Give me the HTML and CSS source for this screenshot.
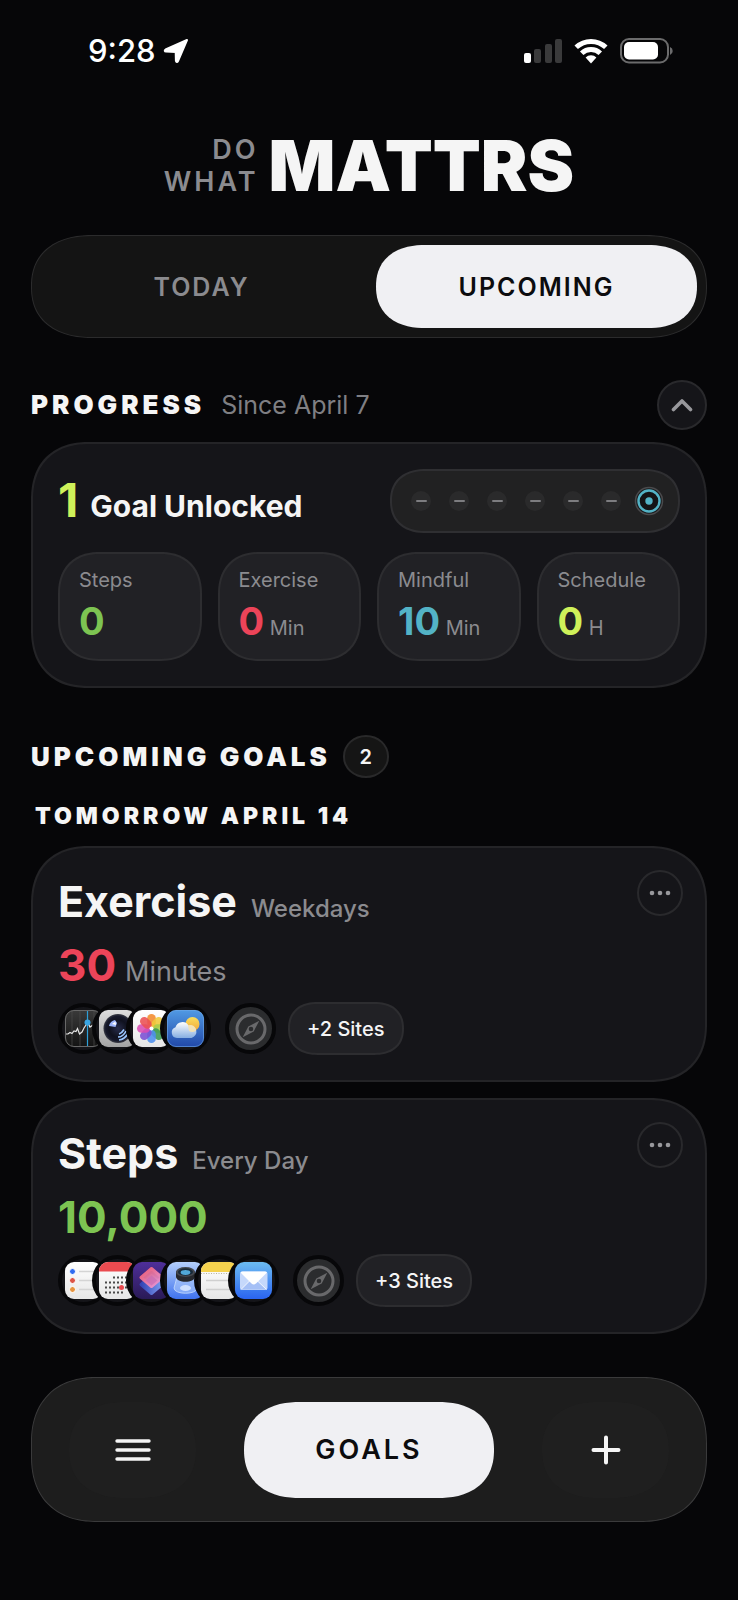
FILE: index.html
```html
<!DOCTYPE html>
<html lang="en">
<head>
<meta charset="utf-8">
<meta name="viewport" content="width=device-width, initial-scale=1">
<title>Do What Mattrs</title>
<link rel="stylesheet" href="styles.css">
</head>
<body>
<svg class="defs" width="0" height="0" aria-hidden="true">
  <defs>
    <clipPath id="tile"><rect width="37" height="37" rx="9"/></clipPath>
    <linearGradient id="gStocks" x1="0" y1="0" x2="0" y2="1"><stop offset="0" stop-color="#3a3a3a"/><stop offset="1" stop-color="#131313"/></linearGradient>
    <linearGradient id="gSilver" x1="0" y1="0" x2="0" y2="1"><stop offset="0" stop-color="#dedede"/><stop offset="1" stop-color="#a3a3a3"/></linearGradient>
    <linearGradient id="gPaper" x1="0" y1="0" x2="0" y2="1"><stop offset="0" stop-color="#ffffff"/><stop offset="1" stop-color="#e6e6e6"/></linearGradient>
    <linearGradient id="gSky" x1="0" y1="0" x2="0" y2="1"><stop offset="0" stop-color="#519ae4"/><stop offset="1" stop-color="#2148a8"/></linearGradient>
    <linearGradient id="gSun" x1="0" y1="0" x2="0" y2="1"><stop offset="0" stop-color="#fbdf5c"/><stop offset="1" stop-color="#f0a83c"/></linearGradient>
    <linearGradient id="gCloud" x1="0" y1="0" x2="0" y2="1"><stop offset="0" stop-color="#ffffff"/><stop offset="1" stop-color="#86aee2"/></linearGradient>
    <linearGradient id="gPurple" x1="0" y1="0" x2="0" y2="1"><stop offset="0" stop-color="#4f2f9a"/><stop offset="1" stop-color="#291a56"/></linearGradient>
    <linearGradient id="gPink" x1="0" y1="0" x2="1" y2="1"><stop offset="0" stop-color="#ea5a70"/><stop offset="1" stop-color="#e49be0"/></linearGradient>
    <linearGradient id="gBlue" x1="0" y1="0" x2="1" y2="0"><stop offset="0" stop-color="#3444b4"/><stop offset="1" stop-color="#7d9cf0"/></linearGradient>
    <linearGradient id="gLoupe" x1="0" y1="0" x2="0" y2="1"><stop offset="0" stop-color="#b4cffb"/><stop offset="1" stop-color="#3f72ee"/></linearGradient>
    <linearGradient id="gMail" x1="0" y1="0" x2="0" y2="1"><stop offset="0" stop-color="#6cbcf2"/><stop offset="1" stop-color="#2a64f0"/></linearGradient>
    <radialGradient id="gLens"><stop offset="0" stop-color="#272c4a"/><stop offset="0.6" stop-color="#10121f"/><stop offset="0.85" stop-color="#16182a"/><stop offset="1" stop-color="#3a3c46"/></radialGradient>
    <symbol id="compass" viewBox="0 0 32 32">
      <circle cx="16" cy="16" r="14" fill="none" stroke="#69696b" stroke-width="3"/>
      <path fill="#69696b" fill-rule="evenodd" d="M24.300 7.700 18.700 18.400 7.700 24.300 13.300 13.600ZM16 13.700a2.300 2.300 0 1 0 0 4.600 2.300 2.300 0 0 0 0-4.600Z"/>
    </symbol>
    <symbol id="dots" viewBox="0 0 22 6"><g fill="#98989c"><circle cx="3" cy="3" r="2.300"/><circle cx="11" cy="3" r="2.300"/><circle cx="19" cy="3" r="2.300"/></g></symbol>
  </defs>
</svg>

<header class="status">
  <div class="status-side">
    <time class="clock">9:28</time>
    <svg width="26" height="26" viewBox="0 0 26 26" aria-hidden="true"><path fill="#fff" stroke="#fff" stroke-width="2" stroke-linejoin="round" d="M24 2 15 23C14.300 24.500 13 24.300 12.900 22.800L12.700 14 3 13.600C1.500 13.500 1.300 12.300 2.600 11.500Z"/></svg>
  </div>
  <div class="status-side status-right">
    <svg width="38" height="26" viewBox="0 0 38 26" aria-label="Signal"><rect y="15" width="7" height="10" rx="2" fill="#fff"/><g fill="#3a3a3b"><rect x="10" y="11" width="7" height="14" rx="2"/><rect x="21" y="6" width="7" height="19" rx="2"/><rect x="31" y="1" width="7" height="24" rx="2"/></g></svg>
    <svg width="34" height="26" viewBox="0 0 34 26" aria-label="Wi-Fi"><g fill="none" stroke="#fff" stroke-width="5"><path d="M2.200 9.300A21.500 21.500 0 0 1 31.800 9.300"/><path d="M7.700 15.300A13.500 13.500 0 0 1 26.300 15.300"/></g><path fill="#fff" d="M11.600 19.600A7.600 7.600 0 0 1 22.400 19.600L17 25.400Z"/></svg>
    <svg width="54" height="26" viewBox="0 0 54 26" aria-label="Battery"><rect x="1" y="1" width="47" height="23.500" rx="8" fill="none" stroke="#6b6b6c" stroke-width="2"/><rect x="4" y="4" width="34" height="17.500" rx="5" fill="#fff"/><path fill="#6b6b6c" d="M50 9a4.300 4.300 0 0 1 0 8Z"/></svg>
  </div>
</header>

<main class="page">
  <h1 class="brand">
    <span class="brand-small">DO<br>WHAT</span>
    <span class="brand-big">MATTRS</span>
  </h1>

  <div class="segment" role="tablist">
    <button class="segment-item" role="tab" aria-selected="false">TODAY</button>
    <button class="segment-item segment-active" role="tab" aria-selected="true">UPCOMING</button>
  </div>

  <section>
    <div class="section-head">
      <h2 class="section-title">PROGRESS</h2>
      <span class="since">Since April 7</span>
      <button class="round collapse" aria-label="Collapse progress">
        <svg width="22" height="14" viewBox="0 0 22 14"><path d="M2.500 11.500 11 3 19.500 11.500" fill="none" stroke="#98989c" stroke-width="3.600" stroke-linecap="round" stroke-linejoin="round"/></svg>
      </button>
    </div>
    <div class="card progress">
      <div class="progress-top">
        <p class="unlocked"><span class="unlocked-count lime">1</span><span class="unlocked-text">Goal Unlocked</span></p>
        <div class="streak" aria-label="Last seven days">
          <i class="day"></i><i class="day"></i><i class="day"></i><i class="day"></i><i class="day"></i><i class="day"></i>
          <svg class="today" width="30" height="30" viewBox="0 0 30 30"><circle cx="15" cy="15" r="13.500" fill="#1b1b1d" stroke="#4a4a4c" stroke-width="1.500"/><circle cx="15" cy="15" r="10.500" fill="#141416" stroke="#53b3c6" stroke-width="2.400"/><circle cx="15" cy="15" r="3.700" fill="#53b3c6"/></svg>
        </div>
      </div>
      <div class="stats">
        <div class="stat"><span class="stat-label">Steps</span><span class="stat-value"><b class="green">0</b></span></div>
        <div class="stat"><span class="stat-label">Exercise</span><span class="stat-value"><b class="red">0</b> Min</span></div>
        <div class="stat"><span class="stat-label">Mindful</span><span class="stat-value"><b class="teal">10</b> Min</span></div>
        <div class="stat"><span class="stat-label">Schedule</span><span class="stat-value"><b class="lime">0</b> H</span></div>
      </div>
    </div>
  </section>

  <section class="upcoming">
    <div class="upcoming-head">
      <h2 class="section-title">UPCOMING GOALS</h2>
      <span class="count">2</span>
    </div>
    <h3 class="date">TOMORROW APRIL 14</h3>

    <article class="card goal">
      <div class="goal-head">
        <h4 class="goal-name">Exercise<span class="repeat">Weekdays</span></h4>
        <button class="round more" aria-label="Exercise options"><svg width="22" height="6"><use href="#dots"/></svg></button>
      </div>
      <p class="amount red">30<span class="unit">Minutes</span></p>
      <div class="blocked">
        <span class="app"><svg class="tile" viewBox="0 0 37 37"><g clip-path="url(#tile)">
          <rect width="37" height="37" fill="url(#gStocks)"/>
          <path d="M7 0V37M15 0V37M29 0V37" stroke="#4b4b4b" stroke-width=".7"/>
          <path d="M0 24H3L5 22.500 7 23.500 9 21 11 21.500 12.500 18.500 14.500 24 17 22 19 18 21 15 22.500 12 25 17 28 15" fill="none" stroke="#e6e6e6" stroke-width="1.200"/>
          <path d="M22.500 0V37" stroke="#2c9fd8" stroke-width="1.200"/><circle cx="22.500" cy="12.500" r="3" fill="#3aa5e2"/></g>
          <rect x=".5" y=".5" width="36" height="36" rx="8.500" fill="none" stroke="#686868"/></svg></span>
        <span class="app"><svg class="tile" viewBox="0 0 37 37"><g clip-path="url(#tile)">
          <rect width="37" height="37" fill="url(#gSilver)"/>
          <circle cx="19" cy="18.500" r="14.500" fill="url(#gLens)"/>
          <path d="M10 16C10.500 12.500 13 10.500 16 10L18 13 16.500 17Z" fill="#9db5fb"/><path d="M13 14 16.500 11.500 17 15Z" fill="#fff"/>
          <path d="M19 27C22 27 25.500 24.500 27 21M20 30C24 29.500 27 27 29 23.500M20 24C22 23.500 23.500 22 25 19.500" fill="none" stroke="#9ac6ff" stroke-width="1.700"/></g></svg></span>
        <span class="app"><svg class="tile" viewBox="0 0 37 37"><g clip-path="url(#tile)">
          <rect width="37" height="37" fill="url(#gPaper)"/>
          <g transform="translate(18.500 18.500)" fill-opacity=".88">
            <rect x="-4.300" y="-14.500" width="8.600" height="13" rx="4.300" fill="#f28a2c"/>
            <rect x="-4.300" y="-14.500" width="8.600" height="13" rx="4.300" fill="#f0c93a" transform="rotate(45)"/>
            <rect x="-4.300" y="-14.500" width="8.600" height="13" rx="4.300" fill="#a6cd48" transform="rotate(90)"/>
            <rect x="-4.300" y="-14.500" width="8.600" height="13" rx="4.300" fill="#3c9a55" transform="rotate(135)"/>
            <rect x="-4.300" y="-14.500" width="8.600" height="13" rx="4.300" fill="#4d90ee" transform="rotate(180)"/>
            <rect x="-4.300" y="-14.500" width="8.600" height="13" rx="4.300" fill="#7a50d4" transform="rotate(225)"/>
            <rect x="-4.300" y="-14.500" width="8.600" height="13" rx="4.300" fill="#d94db3" transform="rotate(270)"/>
            <rect x="-4.300" y="-14.500" width="8.600" height="13" rx="4.300" fill="#ec5053" transform="rotate(315)"/>
          </g><circle cx="18.500" cy="18.500" r="2" fill="#fff"/></g></svg></span>
        <span class="app"><svg class="tile" viewBox="0 0 37 37"><g clip-path="url(#tile)">
          <rect width="37" height="37" fill="url(#gSky)"/>
          <circle cx="25.500" cy="14" r="7" fill="url(#gSun)"/>
          <path d="M10 28A5.500 5.500 0 0 1 8.500 17.300 7.200 7.200 0 0 1 21.500 15.500 6 6 0 0 1 24.500 28Z" fill="url(#gCloud)"/>
          <path d="M21 15.500A5.500 5.500 0 0 1 29 20.500 6 6 0 0 1 22 21Z" fill="#f8e3ab" opacity=".85"/></g>
          <rect x=".5" y=".5" width="36" height="36" rx="8.500" fill="none" stroke="#6ea8e8" opacity=".6"/></svg></span>
        <span class="app web"><svg width="32" height="32"><use href="#compass"/></svg></span>
        <button class="sites">+2 Sites</button>
      </div>
    </article>

    <article class="card goal">
      <div class="goal-head">
        <h4 class="goal-name">Steps<span class="repeat">Every Day</span></h4>
        <button class="round more" aria-label="Steps options"><svg width="22" height="6"><use href="#dots"/></svg></button>
      </div>
      <p class="amount green">10,000</p>
      <div class="blocked">
        <span class="app"><svg class="tile" viewBox="0 0 37 37"><g clip-path="url(#tile)">
          <rect width="37" height="37" fill="url(#gPaper)"/>
          <g stroke="#fff"><circle cx="7.500" cy="9.500" r="3" fill="#316cf0"/><circle cx="7.500" cy="18.500" r="3" fill="#dc5446"/><circle cx="7.500" cy="27.500" r="3" fill="#e59440"/></g>
          <path d="M14 9.500H37M14 18.500H37M14 27.500H37" stroke="#d4d4d4" stroke-width="1.400"/></g></svg></span>
        <span class="app"><svg class="tile" viewBox="0 0 37 37"><g clip-path="url(#tile)">
          <rect width="37" height="37" fill="url(#gPaper)"/><rect width="37" height="9.500" fill="#ea4b50"/>
          <path d="M14 15.500H32M6 20.500H32M6 25.500H32M6 30.500H24" stroke="#4a4a4a" stroke-width="2" stroke-dasharray="2 2"/>
          <circle cx="22.500" cy="25.500" r="2.500" fill="#ea4b50"/></g></svg></span>
        <span class="app"><svg class="tile" viewBox="0 0 37 37"><g clip-path="url(#tile)">
          <rect width="37" height="37" fill="url(#gPurple)"/>
          <path d="M18.500 13.500 29 22.500 18.500 31.500 8 22.500Z" fill="url(#gBlue)" stroke="url(#gBlue)" stroke-width="3" stroke-linejoin="round"/>
          <path d="M18.500 6.500 29 15.500 18.500 24.500 8 15.500Z" fill="url(#gPink)" fill-opacity=".92" stroke="url(#gPink)" stroke-width="3" stroke-linejoin="round"/>
          <path d="M18.500 13.500 24.500 18.500 18.500 23.500 12.500 18.500Z" fill="#c76bb5" opacity=".6"/></g></svg></span>
        <span class="app"><svg class="tile" viewBox="0 0 37 37"><g clip-path="url(#tile)">
          <rect width="37" height="37" fill="url(#gLoupe)"/>
          <path d="M10 15 7 26C7 33 30 33 30 26L27 15Z" fill="#bcd6ff" fill-opacity=".45" stroke="#c9defe" stroke-width=".8"/>
          <ellipse cx="18.500" cy="26" rx="5.500" ry="3" fill="#cfe0ff"/>
          <path d="M9 9.500V14.500C9 21.500 28 21.500 28 14.500V9.500Z" fill="#26282d"/>
          <ellipse cx="18.500" cy="10" rx="9.500" ry="5" fill="#45484f"/><ellipse cx="18.500" cy="10" rx="7.500" ry="3.700" fill="#182a3a"/><ellipse cx="18.500" cy="10.500" rx="4.800" ry="2.400" fill="#51a8d8"/></g></svg></span>
        <span class="app"><svg class="tile" viewBox="0 0 37 37"><g clip-path="url(#tile)">
          <rect width="37" height="37" fill="url(#gPaper)"/><rect width="37" height="10" fill="#f5d24e"/>
          <path d="M0 11.500H37" stroke="#b9b39b" stroke-dasharray="1 1.500"/><path d="M5 18.500H32M5 27.500H32" stroke="#cfcfcf" stroke-width="1.400"/></g></svg></span>
        <span class="app"><svg class="tile" viewBox="0 0 37 37"><g clip-path="url(#tile)">
          <rect width="37" height="37" fill="url(#gMail)"/>
          <rect x="5" y="9.500" width="27.500" height="18.500" rx="2.500" fill="#c5d8fb"/>
          <path d="M6 27.500 15 18.500H22L31.500 27.500Z" fill="#a5c0f6"/>
          <path d="M6 27.500 15 18.500M31.500 27.500 22 18.500" stroke="#fff" stroke-width=".8"/>
          <path d="M5.500 10.500 16.500 21.500Q18.700 23.300 21 21.500L32 10.500Q31.500 9.500 30 9.500H7.500Q6 9.500 5.500 10.500Z" fill="#fff"/></g></svg></span>
        <span class="app web"><svg width="32" height="32"><use href="#compass"/></svg></span>
        <button class="sites">+3 Sites</button>
      </div>
    </article>
  </section>

  <nav class="tabbar" aria-label="Main">
    <button class="tab" aria-label="Menu"><svg width="36" height="22" viewBox="0 0 36 22"><path d="M2 2H34M2 11H34M2 20H34" stroke="#f5f5f5" stroke-width="3.400" stroke-linecap="round"/></svg></button>
    <button class="tab tab-active">GOALS</button>
    <button class="tab" aria-label="Add goal"><svg width="30" height="30" viewBox="0 0 30 30"><path d="M15 2.500V27.500M2.500 15H27.500" stroke="#f5f5f5" stroke-width="4" stroke-linecap="round"/></svg></button>
  </nav>
</main>
</body>
</html>
```
FILE: styles.css
```css
* { box-sizing: border-box; }
body {
  margin: 0;
  background: #060608;
  color: #f5f5f5;
  font-family: Inter, "Liberation Sans", sans-serif;
}
h1, h2, h3, h4, p { margin: 0; }
button { font: inherit; color: inherit; padding: 0; border: 0; background: none; cursor: pointer; }
svg { display: block; flex: none; }
.defs { position: absolute; }

.green { color: #7dc452; }
.red { color: #ec4459; }
.teal { color: #53b3c6; }
.lime { color: #cff15a; }

.status {
  display: flex;
  justify-content: space-between;
  align-items: center;
  height: 38px;
  padding: 0 64px 0 88px;
  margin-top: 32px;
}
.status-side { display: flex; align-items: center; gap: 7px; }
.status-right { gap: 12px; }
.clock { font-size: 31px; font-weight: 500; line-height: 38px; color: #fff; }

.page { padding: 64px 31px 79px; }

.brand { display: flex; justify-content: center; align-items: center; gap: 13px; line-height: 32px; }
.brand-small { font-size: 27px; font-weight: 600; letter-spacing: 3px; text-align: right; color: #8b8b8f; margin-right: -3px; }
.brand-big { font-size: 70px; font-weight: 900; line-height: 64px; }

.segment {
  display: grid;
  grid-template-columns: 1fr 1fr;
  gap: 14px;
  height: 103px;
  margin-top: 37px;
  padding: 9px;
  border: 1px solid #2b2b2c;
  border-radius: 62px / 51px;
  corner-shape: superellipse(1.2);
  background: #141414;
}
.segment-item { border-radius: 50px / 42px; corner-shape: superellipse(1.2); font-size: 25px; font-weight: 600; letter-spacing: 2px; color: #8b8b8f; }
.segment-active { background: #f0f0f3; color: #0c0c0e; }

.section-head { display: flex; align-items: center; gap: 16px; height: 50px; margin-top: 42px; }
.section-title { font-size: 26px; font-weight: 900; line-height: 32px; letter-spacing: 4px; }
.since { font-size: 25px; line-height: 32px; color: #7f7f83; }
.round { display: grid; place-items: center; border: 2px solid #29292c; border-radius: 50%; background: #151519; }
.collapse { width: 50px; height: 50px; margin-left: auto; }

.card { border: 2px solid #242427; border-radius: 58px; corner-shape: superellipse(1.2); background: #151519; }

.progress { margin-top: 12px; padding: 25px; }
.progress-top { display: flex; justify-content: space-between; }
.unlocked { display: flex; align-items: baseline; gap: 12px; font-weight: 700; }
.unlocked-count { font-size: 47px; line-height: 62px; }
.unlocked-text { font-size: 30px; line-height: 1; }
.streak {
  display: flex;
  align-items: center;
  gap: 18px;
  height: 64px;
  padding: 0 14px 0 19px;
  border: 2px solid #2f2f32;
  border-radius: 36px / 32px;
  corner-shape: superellipse(1.2);
  background: #212122;
}
.day { display: grid; place-items: center; width: 20px; height: 20px; border-radius: 50%; background: #2a2a2b; }
.day::before { content: ""; width: 11px; height: 2px; border-radius: 1px; background: #7d7d80; }
.today { margin-left: -5px; }

.stats { display: grid; grid-template-columns: repeat(4, 1fr); gap: 16px; margin-top: 19px; }
.stat {
  display: flex;
  flex-direction: column;
  gap: 6px;
  height: 109px;
  padding: 13px 0 0 19px;
  border: 2px solid #2d2d30;
  border-radius: 42px;
  corner-shape: superellipse(1.2);
  background: #212125;
}
.stat-label { font-size: 20px; line-height: 26px; color: #8b8b8f; }
.stat-value { font-size: 20px; line-height: 44px; color: #8b8b8f; }
.stat-value b { font-size: 38px; font-weight: 700; }

.upcoming { margin-top: 47px; }
.upcoming-head { display: flex; align-items: center; gap: 12px; }
.count {
  display: grid;
  place-items: center;
  width: 46px;
  height: 43px;
  border: 2px solid #29292a;
  border-radius: 23px / 21px;
  background: #151515;
  font-size: 20px;
  font-weight: 600;
}
.date { margin: 24px 0 16px 4px; font-size: 23px; font-weight: 900; line-height: 28px; letter-spacing: 4px; }

.goal { padding: 22px 22px 25px 25px; }
.goal + .goal { margin-top: 16px; }
.goal-head { display: flex; justify-content: space-between; align-items: flex-start; }
.goal-name { margin-top: 5px; font-size: 43px; font-weight: 700; line-height: 52px; }
.repeat { margin-left: 14px; font-size: 24px; font-weight: 500; line-height: 1; color: #8b8b8f; }
.more { width: 46px; height: 46px; }
.amount { margin-top: 12px; font-size: 44px; font-weight: 700; line-height: 52px; }
.unit { margin-left: 9px; font-size: 27px; font-weight: 400; line-height: 1; color: #8b8b8f; }
.blocked { display: flex; align-items: center; margin-top: 11px; }
.app {
  display: grid;
  place-items: center;
  flex: none;
  width: 51px;
  height: 51px;
  border: 4px solid #070709;
  border-radius: 50%;
  background: #151519;
}
.app + .app { margin-left: -17px; }
.app + .web { margin-left: 14px; background: #2b2c2e; }
.tile { width: 37px; height: 37px; }
.sites {
  height: 53px;
  margin-left: 12px;
  padding: 0 17px;
  border: 2px solid #2d2d30;
  border-radius: 30px / 27px;
  corner-shape: superellipse(1.2);
  background: #212125;
  font-size: 20px;
  font-weight: 500;
}

.tabbar {
  display: grid;
  grid-template-columns: 127px 250px 127px;
  justify-content: space-between;
  align-items: center;
  height: 145px;
  margin-top: 43px;
  padding: 0 37px;
  border: 1px solid #3a3a3b;
  border-radius: 66px;
  corner-shape: superellipse(1.2);
  background: #1d1d1d;
}
.tab { display: grid; place-items: center; height: 96px; border-radius: 56px / 48px; corner-shape: superellipse(1.2); background: #1f1f1f; }
.tab-active { background: #f0f0f3; color: #0c0c0e; font-size: 27px; font-weight: 600; letter-spacing: 3px; }
```
